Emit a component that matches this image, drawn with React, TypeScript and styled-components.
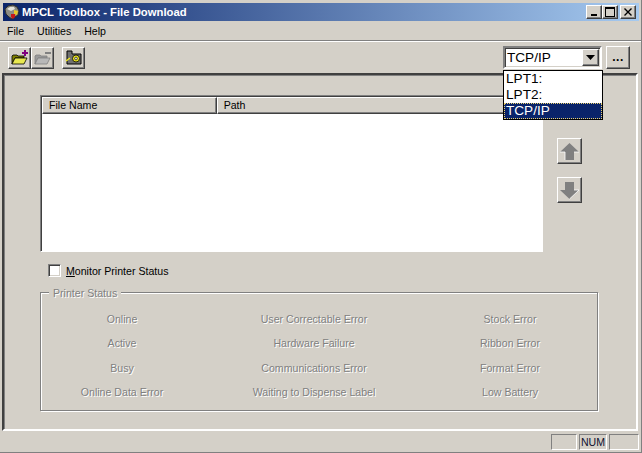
import styled, { createGlobalStyle } from 'styled-components'

const GlobalStyle = createGlobalStyle`
  html, body {
    margin: 0;
    padding: 0;
    background: #d4d0c8;
    font-family: "Liberation Sans", Arial, sans-serif;
    font-size: 10.6px;
    color: #000;
  }
`

const Window = styled.div`
  width: 642px;
  height: 453px;
  box-sizing: border-box;
  padding: 3px 0 0 0;
  background: #d4d0c8;
  display: flex;
  flex-direction: column;
  position: relative;
  overflow: hidden;
  border-bottom: 1px solid #808080;
  border-right: 1px solid #808080;
`

const TitleBar = styled.div`
  height: 18px;
  margin: 0 2px 0 3px;
  background: linear-gradient(90deg, #0a246a 0%, #a6caf0 100%);
  display: flex;
  align-items: center;
  flex: none;
`

const TitleIcon = styled.svg`
  width: 16px;
  height: 16px;
  margin: 0 2px 0 1px;
  flex: none;
`

const TitleText = styled.div`
  color: #fff;
  font-size: 11.3px;
  font-weight: 700;
  flex: 1;
  white-space: nowrap;
`

const CaptionButton = styled.div<{ $gap?: number }>`
  width: 16px;
  height: 14px;
  box-sizing: border-box;
  margin-left: ${p => p.$gap ?? 0}px;
  background: #d4d0c8;
  border: 1px solid;
  border-color: #fff #404040 #404040 #fff;
  box-shadow: inset -1px -1px 0 #808080;
  display: flex;
  align-items: center;
  justify-content: center;
`

const CaptionButtons = styled.div`
  display: flex;
  margin-right: 3px;
`

const MenuBar = styled.div`
  height: 19px;
  display: flex;
  align-items: center;
  padding-left: 7px;
  gap: 13px;
  flex: none;
  border-bottom: 1px solid #808080;
  box-shadow: 0 1px 0 #fff;
`

const Toolbar = styled.div`
  height: 31px;
  margin-top: 1px;
  flex: none;
  display: flex;
  align-items: center;
  padding-left: 8px;
  padding-right: 11px;
  box-sizing: border-box;
`

const ToolButton = styled.div<{ $gap?: number }>`
  width: 23px;
  height: 22px;
  box-sizing: border-box;
  margin-left: ${p => p.$gap ?? 0}px;
  background: #d4d0c8;
  border: 1px solid;
  border-color: #fff #404040 #404040 #fff;
  box-shadow: inset -1px -1px 0 #808080;
  display: flex;
  align-items: center;
  justify-content: center;
`

const ToolSpacer = styled.div`
  flex: 1;
`

const Combo = styled.div`
  width: 99px;
  height: 23px;
  box-sizing: border-box;
  background: #fff;
  border: 2px solid;
  border-color: #808080 #fff #fff #808080;
  box-shadow: inset 1px 1px 0 #404040, inset -1px -1px 0 #d4d0c8;
  display: flex;
  align-items: center;
  font-size: 13.6px;
  padding-left: 2px;
`

const ComboValue = styled.div`
  flex: 1;
`

const ComboArrow = styled.div`
  width: 17px;
  height: 17px;
  margin-right: 1px;
  box-sizing: border-box;
  background: #d4d0c8;
  border: 1px solid;
  border-color: #fff #404040 #404040 #fff;
  box-shadow: inset -1px -1px 0 #808080;
  display: flex;
  align-items: center;
  justify-content: center;
`

const ComboList = styled.div`
  position: absolute;
  left: 503px;
  top: 70px;
  width: 100px;
  height: 50px;
  box-sizing: border-box;
  background: #fff;
  border: 1px solid #000;
  font-size: 13.6px;
  z-index: 2;
`

const ComboItem = styled.div<{ $selected?: boolean }>`
  height: 16px;
  line-height: 16px;
  padding-left: 2px;
  background: ${p => (p.$selected ? '#0a246a' : '#fff')};
  color: ${p => (p.$selected ? '#fff' : '#000')};
  outline: ${p => (p.$selected ? '1px dotted #e8d070' : 'none')};
  outline-offset: -1px;
`

const MoreButton = styled.div`
  width: 24px;
  height: 23px;
  margin-left: 4px;
  box-sizing: border-box;
  background: #d4d0c8;
  border: 1px solid;
  border-color: #fff #404040 #404040 #fff;
  box-shadow: inset -1px -1px 0 #808080;
  font-size: 12px;
  font-weight: 700;
  letter-spacing: 0.5px;
  text-align: center;
  line-height: 20px;
`

const ClientPanel = styled.div`
  flex: 1;
  min-height: 0;
  margin: 0 3px 0 2px;
  box-sizing: border-box;
  border: 2px solid;
  border-color: #404040 #fff #fff #404040;
  box-shadow: inset 1px 1px 0 #808080;
  padding: 20px 0 0 36px;
  display: flex;
  flex-direction: column;
`

const ListRow = styled.div`
  display: flex;
  align-items: flex-start;
`

const FileList = styled.div`
  width: 503px;
  height: 157px;
  box-sizing: border-box;
  background: #fff;
  border: 1px solid;
  border-color: #808080 #fff #fff #808080;
  box-shadow: inset 1px 1px 0 #404040;
  padding: 1px 0 0 1px;
`

const ListHeader = styled.div`
  display: flex;
  height: 17px;
`

const HeaderCell = styled.div<{ $width: number }>`
  width: ${p => p.$width}px;
  box-sizing: border-box;
  height: 17px;
  background: #d4d0c8;
  border: 1px solid;
  border-color: #fff #404040 #404040 #fff;
  box-shadow: inset -1px -1px 0 #808080;
  padding-left: 6px;
  line-height: 15px;
`

const ArrowColumn = styled.div`
  display: flex;
  flex-direction: column;
  gap: 13px;
  margin: 43px 0 0 14px;
`

const ArrowButton = styled.div`
  width: 25px;
  height: 26px;
  box-sizing: border-box;
  background: #d4d0c8;
  border: 1px solid;
  border-color: #fff #404040 #404040 #fff;
  box-shadow: inset -1px -1px 0 #808080;
  display: flex;
  align-items: center;
  justify-content: center;
`

const CheckRow = styled.div`
  display: flex;
  align-items: center;
  margin: 12px 0 0 8px;
  height: 13px;
`

const CheckBox = styled.div`
  width: 13px;
  height: 13px;
  box-sizing: border-box;
  background: #fff;
  border: 1px solid;
  border-color: #808080 #fff #fff #808080;
  box-shadow: inset 1px 1px 0 #404040, inset -1px -1px 0 #d4d0c8;
  margin-right: 5px;
`

const CheckLabel = styled.span`
  u {
    text-decoration: underline;
  }
`

const StatusGroup = styled.div`
  position: relative;
  width: 558px;
  height: 119px;
  margin-top: 15px;
  box-sizing: border-box;
  border: 1px solid #808080;
  box-shadow: 1px 1px 0 #fff, inset 1px 1px 0 #fff;
  display: grid;
  grid-template-columns: 162px 222px 170px;
  grid-auto-rows: 24.4px;
  padding: 14px 0 0 0;
`

const GroupLegend = styled.div`
  position: absolute;
  left: 8px;
  top: -6px;
  padding: 0 4px;
  background: #d4d0c8;
  height: 13px;
  line-height: 13px;
`

const Disabled = styled.span`
  color: #808080;
  text-shadow: 1px 1px 0 #fff;
`

const StatusCell = styled.div`
  text-align: center;
  line-height: 24px;
  white-space: nowrap;
`

const StatusBar = styled.div`
  height: 20px;
  flex: none;
  margin-top: 1px;
  display: flex;
  justify-content: flex-end;
  align-items: center;
  gap: 2px;
  padding-right: 2px;
`

const Indicator = styled.div<{ $width: number }>`
  width: ${p => p.$width}px;
  height: 16px;
  box-sizing: border-box;
  border: 1px solid;
  border-color: #808080 #fff #fff #808080;
  text-align: center;
  line-height: 15px;
  color: #101030;
`

const statusRows = [
  ['Online', 'User Correctable Error', 'Stock Error'],
  ['Active', 'Hardware Failure', 'Ribbon Error'],
  ['Busy', 'Communications Error', 'Format Error'],
  ['Online Data Error', 'Waiting to Dispense Label', 'Low Battery'],
]

function App() {
  return (
    <Window>
      <GlobalStyle />
      <TitleBar>
        <TitleIcon viewBox="0 0 16 16">
          <path d="M1 5l3-3 5-1 4 2 2 4-1 4-3 2-3 2-3-2-3-3z" fill="#8c8c84" stroke="#30302c" strokeWidth="1" />
          <path d="M3 5l3-2 4 0 1 2-4 2z" fill="#e4e4dc" />
          <path d="M10 6l4 1-1 4-3-1z" fill="#e8c828" />
          <path d="M7 10h4v3l-2 2-2-2z" fill="#c81818" />
        </TitleIcon>
        <TitleText>MPCL Toolbox - File Download</TitleText>
        <CaptionButtons>
          <CaptionButton>
            <svg width="8" height="8" viewBox="0 0 8 8">
              <path d="M1 6h6v2H1z" fill="#000" />
            </svg>
          </CaptionButton>
          <CaptionButton>
            <svg width="10" height="10" viewBox="0 0 10 10">
              <path d="M0 0h10v10H0zM1 2v7h8V2z" fill="#000" fillRule="evenodd" />
            </svg>
          </CaptionButton>
          <CaptionButton $gap={2}>
            <svg width="8" height="8" viewBox="0 0 8 8">
              <path d="M0.5 0.5l7 7M7.5 0.5l-7 7" stroke="#000" strokeWidth="1.4" />
            </svg>
          </CaptionButton>
        </CaptionButtons>
      </TitleBar>
      <MenuBar>
        <span>File</span>
        <span>Utilities</span>
        <span>Help</span>
      </MenuBar>
      <Toolbar>
        <ToolButton>
          <svg width="18" height="16" viewBox="0 0 18 16">
            <path d="M1 14V6l1-1h4l1 1h6v2H4l-3 6z" fill="#808000" stroke="#000" strokeWidth="0.8" />
            <path d="M1 14l3-6h12l-3 6z" fill="#e8e850" stroke="#000" strokeWidth="0.8" />
            <path d="M13 0h2v2h2v2h-2v2h-2V4h-2V2h2z" fill="#800080" />
          </svg>
        </ToolButton>
        <ToolButton>
          <svg width="18" height="16" viewBox="0 0 18 16">
            <path d="M1 14V6l1-1h4l1 1h6v2H4l-3 6z" fill="#9a9a9a" stroke="#808080" strokeWidth="0.8" />
            <path d="M1 14l3-6h12l-3 6z" fill="#b8b8b8" stroke="#808080" strokeWidth="0.8" />
            <path d="M11 2h6v2h-6z" fill="#808080" />
          </svg>
        </ToolButton>
        <ToolButton $gap={8}>
          <svg width="17" height="15" viewBox="0 0 17 15">
            <path d="M2 1h5v3h9v10H2z" fill="#707070" stroke="#000" />
            <circle cx="11" cy="8.5" r="3.5" fill="#f0e820" stroke="#000" strokeWidth="0.8" />
            <circle cx="11" cy="8.5" r="1.4" fill="#d8d8d0" stroke="#000" strokeWidth="0.6" />
            <path d="M1 11l4-3" stroke="#f0e820" strokeWidth="1.5" />
          </svg>
        </ToolButton>
        <ToolSpacer />
        <Combo>
          <ComboValue>TCP/IP</ComboValue>
          <ComboArrow>
            <svg width="9" height="5" viewBox="0 0 9 5">
              <path d="M0 0h9L4.5 5z" fill="#000" />
            </svg>
          </ComboArrow>
        </Combo>
        <MoreButton>...</MoreButton>
      </Toolbar>
      <ComboList>
        <ComboItem>LPT1:</ComboItem>
        <ComboItem>LPT2:</ComboItem>
        <ComboItem $selected>TCP/IP</ComboItem>
      </ComboList>
      <ClientPanel>
        <ListRow>
          <FileList>
            <ListHeader>
              <HeaderCell $width={175}>File Name</HeaderCell>
              <HeaderCell $width={326}>Path</HeaderCell>
            </ListHeader>
          </FileList>
          <ArrowColumn>
            <ArrowButton>
              <svg width="19" height="19" viewBox="0 0 19 19">
                <path d="M9.5 1L19 10h-5v8H5v-8H0z" fill="#808080" />
                <path d="M5 10v8M0 10h5M14 10h5" stroke="#fff" strokeWidth="0.8" fill="none" />
              </svg>
            </ArrowButton>
            <ArrowButton>
              <svg width="19" height="19" viewBox="0 0 19 19">
                <path d="M5 1h9v8h5l-9.5 9L0 9h5z" fill="#808080" />
                <path d="M9.5 18L19 9h-5" stroke="#fff" strokeWidth="0.8" fill="none" />
              </svg>
            </ArrowButton>
          </ArrowColumn>
        </ListRow>
        <CheckRow>
          <CheckBox />
          <CheckLabel>
            <u>M</u>onitor Printer Status
          </CheckLabel>
        </CheckRow>
        <StatusGroup>
          <GroupLegend>
            <Disabled>Printer Status</Disabled>
          </GroupLegend>
          {statusRows.flat().map(label => (
            <StatusCell key={label}>
              <Disabled>{label}</Disabled>
            </StatusCell>
          ))}
        </StatusGroup>
      </ClientPanel>
      <StatusBar>
        <Indicator $width={26} />
        <Indicator $width={28}>NUM</Indicator>
        <Indicator $width={30} />
      </StatusBar>
    </Window>
  )
}

export default App
